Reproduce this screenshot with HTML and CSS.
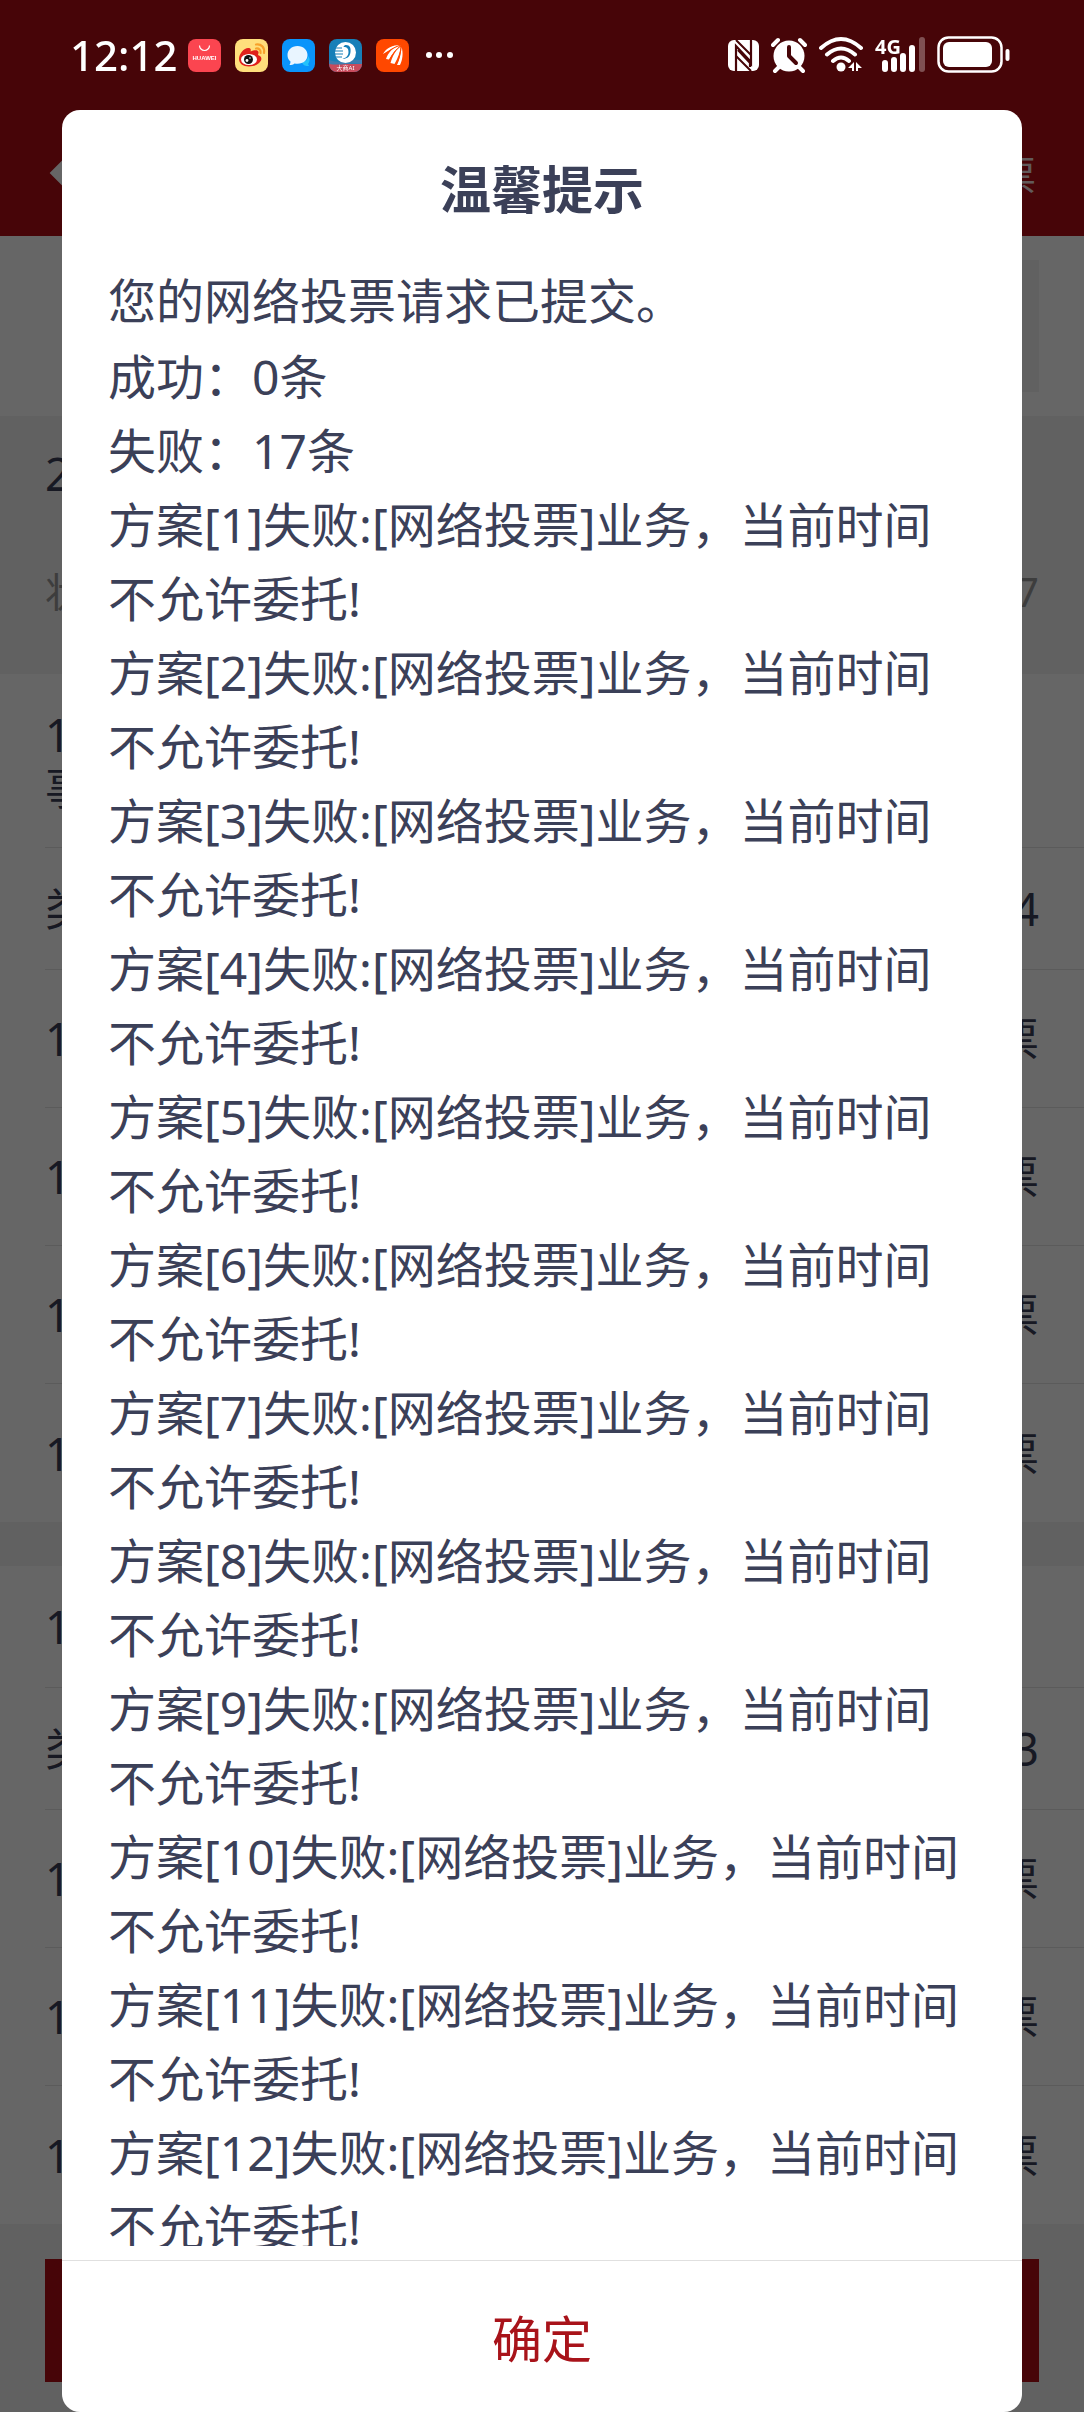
FILE: index.html
```html
<!DOCTYPE html>
<html lang="zh-CN">
<head>
    <meta charset="UTF-8">
    <meta name="viewport" content="width=device-width, initial-scale=1">
    <title>网络投票</title>
    <link rel="stylesheet" href="styles.css">
</head>
<body>

    <div class="page">
        <header class="nav">
            <a href="#" class="nav__back" aria-label="返回">
                <svg width="30" height="44" viewBox="0 0 30 44"><path d="M26 4 8 22l18 18" fill="none" stroke="#fff" stroke-width="9"/></svg>
            </a>
            <a href="#" class="nav__link">票</a>
        </header>

        <section class="account">
            <div class="account__box"></div>
        </section>

        <section class="meeting">
            <div class="meeting__title">2</div>
            <div class="meeting__info"><span>状</span><span>7</span></div>
        </section>

        <ul class="vote-list">
            <li class="vote-list__item head"><span>1<br>事</span></li>
            <li class="vote-list__item type"><span>类</span><span>4</span></li>
            <li class="vote-list__item"><span>1</span><span>票</span></li>
            <li class="vote-list__item"><span>1</span><span>票</span></li>
            <li class="vote-list__item"><span>1</span><span>票</span></li>
            <li class="vote-list__item"><span>1</span><span>票</span></li>
        </ul>

        <ul class="vote-list">
            <li class="vote-list__item type"><span>1</span></li>
            <li class="vote-list__item type"><span>类</span><span>3</span></li>
            <li class="vote-list__item"><span>1</span><span>票</span></li>
            <li class="vote-list__item"><span>1</span><span>票</span></li>
            <li class="vote-list__item"><span>1</span><span>票</span></li>
        </ul>

        <footer class="submit">
            <button type="button" class="submit__btn" aria-label="提交"></button>
        </footer>
    </div>

    <div class="mask">
        <div class="status">
            <span class="status__time">12:12</span>
            <div class="status__apps">
                <svg width="33" height="33" viewBox="0 0 33 33">
                    <rect width="33" height="33" rx="8" fill="#fb4550"/>
                    <path d="M11.500 6.500a5 5 0 0 0 10 0" fill="none" stroke="#fff" stroke-width="1.200"/>
                    <text x="16.500" y="21" class="huawei">HUAWEI</text>
                </svg>
                <svg width="33" height="33" viewBox="0 0 33 33">
                    <rect width="33" height="33" rx="8" fill="#ffdf7c"/>
                    <path d="M4 20C4 14 10 8 14 9c2 .5 2 2 1.500 3.500C19 11 23 10.500 23.500 13c.2 1-.3 2-.5 3 3 1 4 3 3 5.500-2 4-7 6-12 6-6 0-10-3-10-7.500z" fill="#e0201b"/>
                    <ellipse cx="14" cy="20.500" rx="8" ry="5.500" fill="#fff"/>
                    <circle cx="13.500" cy="20.500" r="4.500" fill="#111"/>
                    <circle cx="12" cy="21.500" r="1.400" fill="#fff"/>
                    <circle cx="15" cy="19" r=".8" fill="#fff"/>
                    <path d="M21 9.500c3-.5 5 1.500 4.500 4.500M21 5.500c5-1 9 3 8 8.500" fill="none" stroke="#f7a12b" stroke-width="2.200" stroke-linecap="round"/>
                </svg>
                <svg width="33" height="33" viewBox="0 0 33 33">
                    <rect width="33" height="33" rx="8" fill="#0a94fb"/>
                    <path d="M20 23c5 0 6-4 6-6 3 3 1 7 0 8l1 2c-3 0-6 0-7-4z" fill="#25c2fb"/>
                    <path d="M15.500 7C9.500 7 5.500 11 5.500 16c0 3 1 5 3 6.500 0 1.500-.5 2.500-1 3.500 2 0 4-.5 5-1.500 8 1.500 13-3 13-8.500 0-5-4-9-10-9z" fill="#e9f5ff"/>
                </svg>
                <svg width="33" height="33" viewBox="0 0 33 33">
                    <rect width="33" height="33" rx="8" fill="#167fb8"/>
                    <path d="M0 25h33a8 8 0 0 1-8 8H8a8 8 0 0 1-8-8z" fill="#c94b5c"/>
                    <path d="M0 21q8 3 16.500 1T33 21v4q-8-1-16.500 0T0 25z" fill="#3d7daf"/>
                    <circle cx="16.500" cy="13.500" r="10.500" fill="#fff"/>
                    <path d="M17 6c4 0 5 3 4.500 7-.5 5-4 7-8 7 3-1 6-3 6-7 0-3-1-5-5-5 .5-1.500 1.500-2 2.500-2z" fill="#167fb8"/>
                    <path d="M5 9h8M5 12h9M5 15h9M6 18h7" stroke="#167fb8" stroke-width="1.200"/>
                    <text x="16.500" y="31" class="badge">大商AI</text>
                </svg>
                <svg width="33" height="33" viewBox="0 0 33 33">
                    <rect width="33" height="33" rx="8" fill="#ff4800"/>
                    <path d="M7 15C10 9 17 6 24 6c-5 2-11 5-17 9z" fill="#fff"/>
                    <path d="M10 20C12 14 17 8 24.500 6.500 20 10 16 15 13 20.500z" fill="#fff"/>
                    <path d="M14.500 24C16 18 20 10 25 7c-1 6-3 12-6.500 18z" fill="#fff"/>
                    <path d="M21 26c2.500-5 4-12 4.500-18 2 6 1 13-1.500 18z" fill="#fff"/>
                    <path d="M8 17C12 12 18 8 24 6.500M13 22C16 16 20 10 25 7M20 26c3-6 5-13 5-19" fill="none" stroke="#ff4800" stroke-width="1"/>
                </svg>
                <svg width="33" height="33" viewBox="0 0 33 33" fill="#fff">
                    <circle cx="6" cy="16" r="3"/><circle cx="16" cy="16" r="3"/><circle cx="27" cy="16" r="3"/>
                </svg>
            </div>
            <div class="status__signals">
                <svg width="31" height="38" viewBox="0 0 31 38">
                    <rect y="4" width="31" height="31" rx="6" fill="#fff"/>
                    <path d="M8 35V10L22 25V31M23 4V28L10 14" fill="none" stroke="#470508" stroke-width="2.200"/>
                    <path d="M8 4l15 15M8 20l15 15" stroke="#470508" stroke-width="2"/>
                </svg>
                <svg width="36" height="38" viewBox="0 0 36 38">
                    <path d="M2 9l5-5M29 4l5 5M8 31l-4 4M28 31l4 4" stroke="#fff" stroke-width="4" stroke-linecap="round"/>
                    <circle cx="18" cy="20" r="15.500" fill="#fff"/>
                    <path d="M18 11v9l7 7" fill="none" stroke="#470508" stroke-width="4" stroke-linecap="round" stroke-linejoin="round"/>
                </svg>
                <svg width="44" height="38" viewBox="0 0 44 38">
                    <path d="M2 12q20-18 40 0M8 18.500q14-12 28 0M14 25q8-7 16 0" fill="none" stroke="#fff" stroke-width="4" stroke-linecap="round"/>
                    <circle cx="22" cy="31" r="4.500" fill="#fff"/>
                    <path d="M29 32l6-6v9h-2v-3zM37 26l6 6h-4v3h-2z" fill="#fff"/>
                </svg>
                <svg class="signal" width="50" height="38" viewBox="0 0 50 38">
                    <text x="0" y="18" class="net">4G</text>
                    <path d="M10 27v6M19 24v9M28 20v13M37 12v21" stroke="#fff" stroke-width="6" stroke-linecap="round"/>
                    <path d="M47 4v29" stroke="#fff" stroke-width="6" stroke-linecap="round" opacity=".3"/>
                </svg>
                <svg width="73" height="38" viewBox="0 0 73 38">
                    <rect x="1.500" y="1.500" width="63" height="34" rx="10" fill="none" stroke="#fff" stroke-width="2.500"/>
                    <rect x="6" y="6" width="49" height="25" rx="6" fill="#fff"/>
                    <path d="M70.500 15v8" stroke="#fff" stroke-width="4" stroke-linecap="round"/>
                </svg>
            </div>
        </div>

        <div class="dialog" role="dialog" aria-labelledby="dialog-title">
            <h2 id="dialog-title" class="dialog__title">温馨提示</h2>
            <div class="dialog__body">
                <p class="dialog__lead">您的网络投票请求已提交。</p>
                <p>成功：0条</p>
                <p>失败：17条</p>
                <p>方案[1]失败:[网络投票]业务，当前时间不允许委托!</p>
                <p>方案[2]失败:[网络投票]业务，当前时间不允许委托!</p>
                <p>方案[3]失败:[网络投票]业务，当前时间不允许委托!</p>
                <p>方案[4]失败:[网络投票]业务，当前时间不允许委托!</p>
                <p>方案[5]失败:[网络投票]业务，当前时间不允许委托!</p>
                <p>方案[6]失败:[网络投票]业务，当前时间不允许委托!</p>
                <p>方案[7]失败:[网络投票]业务，当前时间不允许委托!</p>
                <p>方案[8]失败:[网络投票]业务，当前时间不允许委托!</p>
                <p>方案[9]失败:[网络投票]业务，当前时间不允许委托!</p>
                <p>方案[10]失败:[网络投票]业务，当前时间不允许委托!</p>
                <p>方案[11]失败:[网络投票]业务，当前时间不允许委托!</p>
                <p>方案[12]失败:[网络投票]业务，当前时间不允许委托!</p>
            </div>
            <button type="button" class="dialog__ok">确定</button>
        </div>
    </div>

</body>
</html>
```
FILE: styles.css
```css
*{
    box-sizing: border-box;
}
body{
    margin: 0;
    background: #f2f2f2;
    color: #3b4058;
    font-family: "Noto Sans", "Noto Sans CJK SC", sans-serif;
    font-size: 45px;
}
ul, p, h2{
    margin: 0;
    padding: 0;
    list-style: none;
}
a{
    color: inherit;
    text-decoration: none;
}
button{
    border: 0;
    font-family: inherit;
}
svg{
    display: block;
}

/* 页面 */
.nav{
    display: flex;
    align-items: center;
    justify-content: space-between;
    height: 236px;
    padding: 110px 48px 0 48px;
    background: #b20d14;
}
.nav__link{
    color: rgba(255, 255, 255, .9);
    font-size: 40px;
}
.account{
    padding: 24px 45px;
    background: #fff;
}
.account__box{
    width: 50%;
    height: 132px;
    margin-left: auto;
    background: #f2f2f2;
}
.meeting{
    padding: 25px 45px 52px;
}
.meeting__title{
    line-height: 66px;
}
.meeting__info{
    display: flex;
    justify-content: space-between;
    margin-top: 55px;
    color: #999;
    font-size: 40px;
    line-height: 60px;
}
.vote-list{
    padding-left: 45px;
    background: #fff;
}
.vote-list + .vote-list{
    margin-top: 44px;
}
.vote-list__item{
    display: flex;
    align-items: center;
    justify-content: space-between;
    min-height: 138px;
    padding-right: 45px;
    border-bottom: 1px solid #e4e4e4;
    line-height: 53px;
}
.vote-list__item.head{
    min-height: 174px;
}
.vote-list__item.type{
    min-height: 122px;
}
.vote-list__item:last-child{
    border-bottom: 0;
}
.submit{
    padding: 35px 45px 30px;
}
.submit__btn{
    display: block;
    width: 100%;
    height: 123px;
    background: #b20d14;
}

/* 遮罩 */
.mask{
    position: fixed;
    top: 0;
    right: 0;
    bottom: 0;
    left: 0;
    display: flex;
    flex-direction: column;
    padding: 0 62px;
    background: rgba(0, 0, 0, .6);
}

/* 状态栏 */
.status{
    display: flex;
    flex: none;
    align-items: center;
    height: 110px;
    padding: 0 12px 0 8px;
    color: #fff;
}
.status__time{
    font-size: 42px;
    font-weight: 500;
    line-height: 110px;
}
.status__apps{
    display: flex;
    gap: 14px;
    margin-left: 10px;
}
.status__signals{
    display: flex;
    gap: 12px;
    margin-left: auto;
}
.signal{
    overflow: visible;
}
.huawei{
    fill: #fff;
    font: bold 6px "Liberation Sans", sans-serif;
    text-anchor: middle;
}
.badge{
    fill: #fff;
    font-size: 6px;
    text-anchor: middle;
}
.net{
    fill: #fff;
    font: bold 20px "Open Sans", sans-serif;
}

/* 弹窗 */
.dialog{
    display: flex;
    flex: 1;
    flex-direction: column;
    min-height: 0;
    background: #fff;
    border-radius: 18px;
}
.dialog__title{
    flex: none;
    padding: 42px 0 38px;
    font-size: 51px;
    font-weight: 700;
    line-height: 74px;
    text-align: center;
}
.dialog__body{
    flex: 1;
    min-height: 0;
    margin: 0 46px 14px;
    overflow-y: auto;
    scrollbar-width: none;
    font-size: 48px;
    line-height: 74px;
}
.dialog__lead{
    margin-bottom: 2px;
}
.dialog__ok{
    flex: none;
    height: 152px;
    background: none;
    border-top: 1px solid #e0e0e0;
    color: #a8131a;
    font-size: 50px;
}
```
